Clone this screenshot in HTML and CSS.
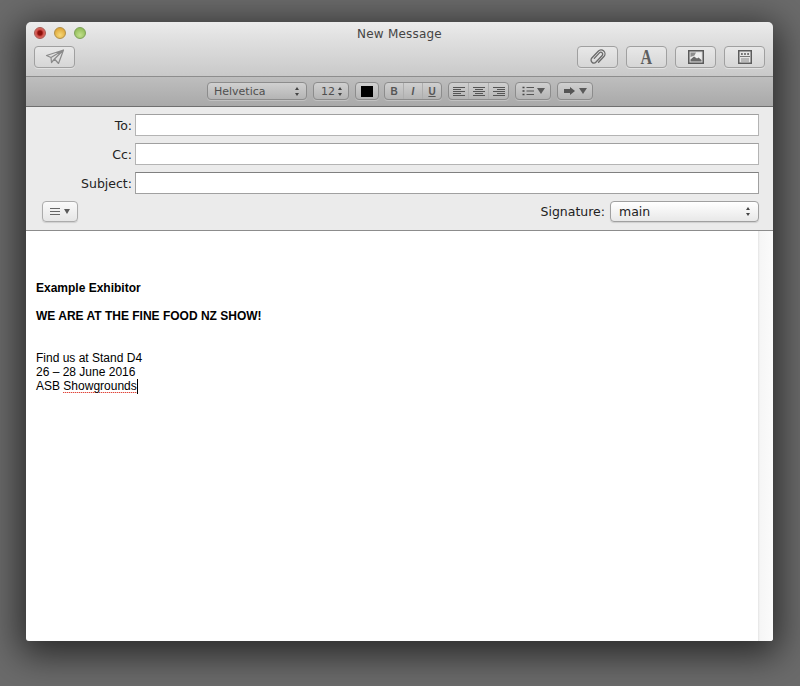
FILE: index.html
```html
<!DOCTYPE html>
<html lang="en">
<head>
<meta charset="utf-8">
<title>New Message</title>
<link rel="stylesheet" href="styles.css">
</head>
<body>
<main class="window">
  <header class="toolbar">
    <div class="title-row">
      <div class="lights">
        <span class="light red"></span>
        <span class="light yellow"></span>
        <span class="light green"></span>
      </div>
      <h1 class="title">New Message</h1>
    </div>
    <div class="tool-row">
      <button class="tool">
        <svg width="20" height="16" viewBox="0 0 20 16"><path d="M1.5 6.5 L18.5 1 L13.5 14.5 L9.5 10 L6.5 13.5 L6 8.5 Z M6 8.5 L18.5 1 M9.5 10 L18.5 1" fill="none" stroke="#8a8a8a" stroke-width="1.2" stroke-linejoin="round"/></svg>
      </button>
      <div class="tool-group">
        <button class="tool">
          <svg width="18" height="18" viewBox="0 0 18 18"><g transform="rotate(43 9 9)"><path d="M7.2 12.5 V5 A1.9 1.9 0 0 1 11 5 V14 A2.9 2.9 0 0 1 5.2 14 V4.6 A3.9 3.9 0 0 1 13 4.6 V12.5" fill="none" stroke="#6a6a6a" stroke-width="1.3" stroke-linecap="round"/></g></svg>
        </button>
        <button class="tool"><span class="font-a">A</span></button>
        <button class="tool">
          <svg width="16" height="14" viewBox="0 0 16 14"><rect x=".75" y=".75" width="14.5" height="12.5" fill="#d9d9d9" stroke="#5a5a5a" stroke-width="1.5"/><rect x="2.5" y="2.5" width="11" height="9" fill="#eee"/><path d="M2.5 2.5 H8 L6.5 5.5 L2.5 7 Z" fill="#8d8d8d"/><path d="M2.5 11.5 V9.5 L6 6.5 L9 8.5 L10.5 7.5 L13.5 10 V11.5 Z" fill="#6a6a6a"/></svg>
        </button>
        <button class="tool">
          <svg width="14" height="14" viewBox="0 0 14 14"><rect x=".75" y=".75" width="12.5" height="12.5" fill="#e6e6e6" stroke="#5c5c5c" stroke-width="1.5"/><path d="M3 4 H4.8 M6.1 4 H7.9 M9.2 4 H11" stroke="#4f4f4f" stroke-width="1.6"/><path d="M2 6.5 H12" stroke="#777"/><path d="M3 9 H11 M3 11 H11" stroke="#8a8a8a"/></svg>
        </button>
      </div>
    </div>
  </header>

  <nav class="format-bar">
    <div class="ctl font-select"><span>Helvetica</span><span class="updown"></span></div>
    <div class="ctl size-select"><span>12</span><span class="updown"></span></div>
    <div class="ctl color-well"><span class="swatch"></span></div>
    <div class="ctl segs style-segs">
      <span class="seg bold">B</span><span class="seg italic">I</span><span class="seg under">U</span>
    </div>
    <div class="ctl segs align-segs">
      <span class="seg"><svg width="12" height="11" viewBox="0 0 12 11"><path d="M0 1.5H12M0 3.5H8M0 5.5H12M0 7.5H8M0 9.5H12" stroke="#555"/></svg></span>
      <span class="seg"><svg width="12" height="11" viewBox="0 0 12 11"><path d="M0 1.5H12M2 3.5H10M0 5.5H12M2 7.5H10M0 9.5H12" stroke="#555"/></svg></span>
      <span class="seg"><svg width="12" height="11" viewBox="0 0 12 11"><path d="M0 1.5H12M4 3.5H12M0 5.5H12M4 7.5H12M0 9.5H12" stroke="#555"/></svg></span>
    </div>
    <div class="ctl menu-btn">
      <svg width="12" height="12" viewBox="0 0 12 12"><path d="M4.5 2.5H12M4.5 6H12M4.5 9.5H12" stroke="#555"/><path d="M.5 2.5H2.5M.5 6H2.5M.5 9.5H2.5" stroke="#444" stroke-width="1.6"/></svg>
      <span class="caret-down"></span>
    </div>
    <div class="ctl menu-btn">
      <svg width="12" height="10" viewBox="0 0 12 10"><path d="M0 3H6V1L11 5L6 9V7H0Z" fill="#555"/></svg>
      <span class="caret-down"></span>
    </div>
  </nav>

  <section class="headers">
    <div class="field"><label class="label">To:</label><div class="input"></div></div>
    <div class="field"><label class="label">Cc:</label><div class="input"></div></div>
    <div class="field"><label class="label">Subject:</label><div class="input subject"></div></div>
    <div class="options">
      <div class="list-btn">
        <svg width="10" height="8" viewBox="0 0 10 8"><path d="M0 .5H10M0 3.5H10M0 6.5H10" stroke="#666"/></svg>
        <span class="caret-down small"></span>
      </div>
      <div class="signature">
        <span class="sig-label">Signature:</span>
        <div class="sig-select"><span>main</span><span class="updown"></span></div>
      </div>
    </div>
  </section>

  <section class="compose">
    <div class="message">
      <p class="strong">Example Exhibitor</p>
      <p class="blank"></p>
      <p class="strong">WE ARE AT THE FINE FOOD NZ SHOW!</p>
      <p class="blank"></p>
      <p class="blank"></p>
      <p>Find us at Stand D4</p>
      <p>26 – 28 June 2016</p>
      <p>ASB <span class="misspelled">Showgrounds</span><span class="cursor"></span></p>
    </div>
    <aside class="gutter"></aside>
  </section>
</main>
</body>
</html>
```
FILE: styles.css
```css
* { box-sizing: border-box; }
html, body { margin: 0; height: 686px; overflow: hidden; }
body {
  padding: 22px 27px 45px 26px;
  background: #6b6b6b;
}
.window {
  height: 619px;
  display: flex;
  flex-direction: column;
  border-radius: 5px 5px 3px 3px;
  overflow: hidden;
  box-shadow: 0 8px 36px 6px rgba(0, 0, 0, .62);
  font-family: "DejaVu Sans", sans-serif;
}

/* Title + toolbar */
.toolbar {
  height: 55px;
  padding: 0 8px;
  flex: none;
  background: linear-gradient(#ececec 0, #e2e2e2 25%, #c9c9c9 100%);
  border-bottom: 1px solid #8d8d8d;
}
.title-row {
  position: relative;
  height: 24px;
  display: flex;
  align-items: center;
  justify-content: center;
}
.title {
  margin: 0;
  font-size: 12px;
  font-weight: 400;
  color: #444;
  letter-spacing: .2px;
}
.lights {
  position: absolute;
  left: 0;
  top: 5px;
  display: flex;
  gap: 8px;
}
.light {
  width: 12px;
  height: 12px;
  border-radius: 50%;
  border: 1px solid #888;
}
.red { background: radial-gradient(circle at 50% 50%, #8c0f0a 0 2px, #cf4f48 3.5px, #e0928c 100%); border-color: #a85850; }
.yellow { background: radial-gradient(circle at 50% 70%, #f6d878, #dfa83a 75%); border-color: #b08f48; }
.green { background: radial-gradient(circle at 50% 70%, #c2e08c, #93bd5a 75%); border-color: #7da058; }
.tool-row {
  display: flex;
  justify-content: space-between;
}
.tool-group { display: flex; gap: 8px; }
.tool {
  width: 41px;
  height: 22px;
  padding: 0;
  display: flex;
  align-items: center;
  justify-content: center;
  border: 1px solid #a0a0a0;
  border-radius: 4px;
  background: linear-gradient(#e8e8e8, #d6d6d6);
  box-shadow: 0 1px 0 rgba(255, 255, 255, .4);
}
.font-a {
  font-family: "Liberation Serif", serif;
  font-weight: 700;
  font-size: 20px;
  line-height: 1;
  color: #5e5e5e;
  transform: scaleX(.8);
}

/* Format bar */
.format-bar {
  height: 30px;
  flex: none;
  padding: 5px 0 0 181px;
  display: flex;
  align-items: flex-start;
  gap: 6px;
  background: linear-gradient(#bebebe, #a9a9a9);
  border-bottom: 1px solid #6f6f6f;
  font-size: 11px;
  color: #4f4f4f;
}
.ctl {
  height: 18px;
  display: flex;
  align-items: center;
  border: 1px solid #8c8c8c;
  border-radius: 4px;
  background: linear-gradient(#d0d0d0, #b4b4b4);
  box-shadow: 0 1px 0 rgba(255, 255, 255, .25);
}
.font-select { width: 100px; padding: 0 6px 0 6px; justify-content: space-between; }
.size-select { width: 36px; padding: 0 5px 0 7px; justify-content: space-between; }
.color-well { width: 24px; justify-content: center; margin-right: -1px; }
.swatch { width: 12px; height: 11px; background: #000; }
.segs { display: flex; }
.style-segs { width: 58px; }
.align-segs { width: 61px; }
.seg {
  flex: 1;
  height: 100%;
  display: flex;
  align-items: center;
  justify-content: center;
  border-left: 1px solid #aeaeae;
  font-family: "Liberation Sans", sans-serif;
  font-size: 10px;
  color: #555;
}
.seg:first-child { border-left: 0; }
.bold { font-weight: 700; }
.italic { font-style: italic; font-weight: 700; }
.under { text-decoration: underline; font-weight: 700; }
.menu-btn { width: 36px; justify-content: center; gap: 3px; }
.updown {
  width: 5px;
  height: 9px;
  flex: none;
  position: relative;
}
.updown::before, .updown::after {
  content: "";
  position: absolute;
  left: 0;
  border-left: 2.5px solid transparent;
  border-right: 2.5px solid transparent;
}
.updown::before { top: 0; border-bottom: 3px solid #444; }
.updown::after { bottom: 0; border-top: 3px solid #444; }
.caret-down {
  width: 0;
  height: 0;
  border-left: 4px solid transparent;
  border-right: 4px solid transparent;
  border-top: 6px solid #5a5a5a;
}
.caret-down.small {
  border-left-width: 3.5px;
  border-right-width: 3.5px;
  border-top-width: 5px;
}

/* Address headers */
.headers {
  height: 124px;
  flex: none;
  padding: 7px 14px 0 16px;
  background: #ebebeb;
  border-bottom: 1px solid #8c8c8c;
}
.field {
  height: 22px;
  margin-bottom: 7px;
  display: flex;
  align-items: center;
  gap: 3px;
}
.label {
  width: 90px;
  text-align: right;
  font-size: 12.5px;
  color: #222;
}
.input {
  flex: 1;
  height: 22px;
  background: #fff;
  border: 1px solid #b4b4b4;
  border-top-color: #a0a0a0;
}
.input.subject { border-color: #a0a0a0; border-top-color: #808080; }
.options {
  display: flex;
  justify-content: space-between;
  align-items: center;
}
.list-btn {
  width: 36px;
  height: 21px;
  display: flex;
  align-items: center;
  justify-content: center;
  gap: 4px;
  border: 1px solid #ababab;
  border-radius: 4px;
  background: linear-gradient(#fafafa, #e6e6e6);
  box-shadow: 0 1px 1px rgba(0, 0, 0, .12);
}
.signature { display: flex; align-items: center; gap: 5px; }
.sig-label { font-size: 12.5px; color: #222; }
.sig-select {
  width: 149px;
  height: 21px;
  padding: 0 7px 0 8px;
  display: flex;
  align-items: center;
  justify-content: space-between;
  border: 1px solid #a0a0a0;
  border-radius: 4px;
  background: linear-gradient(#fff, #e8e8e8);
  box-shadow: 0 1px 1px rgba(0, 0, 0, .12);
  font-size: 12.5px;
  color: #222;
}

/* Compose body */
.compose {
  flex: 1;
  display: flex;
  background: #fff;
}
.message {
  flex: 1;
  padding: 50px 0 0 10px;
  font-family: "Liberation Sans", Arial, sans-serif;
  font-size: 12px;
  line-height: 14px;
  color: #000;
}
.message p { margin: 0; height: 14px; }
.strong { font-weight: 700; }
.misspelled {
  background: repeating-linear-gradient(90deg, #e0453a 0 1px, #f6c4bf 1px 2px) 0 100% / 100% 1px no-repeat;
}
.cursor {
  display: inline-block;
  width: 1px;
  height: 15px;
  vertical-align: -4px;
  background: #000;
}
.gutter {
  width: 15px;
  background: linear-gradient(90deg, #e4e4e4 0, #f6f6f6 2px, #fbfbfb 100%);
}
```
